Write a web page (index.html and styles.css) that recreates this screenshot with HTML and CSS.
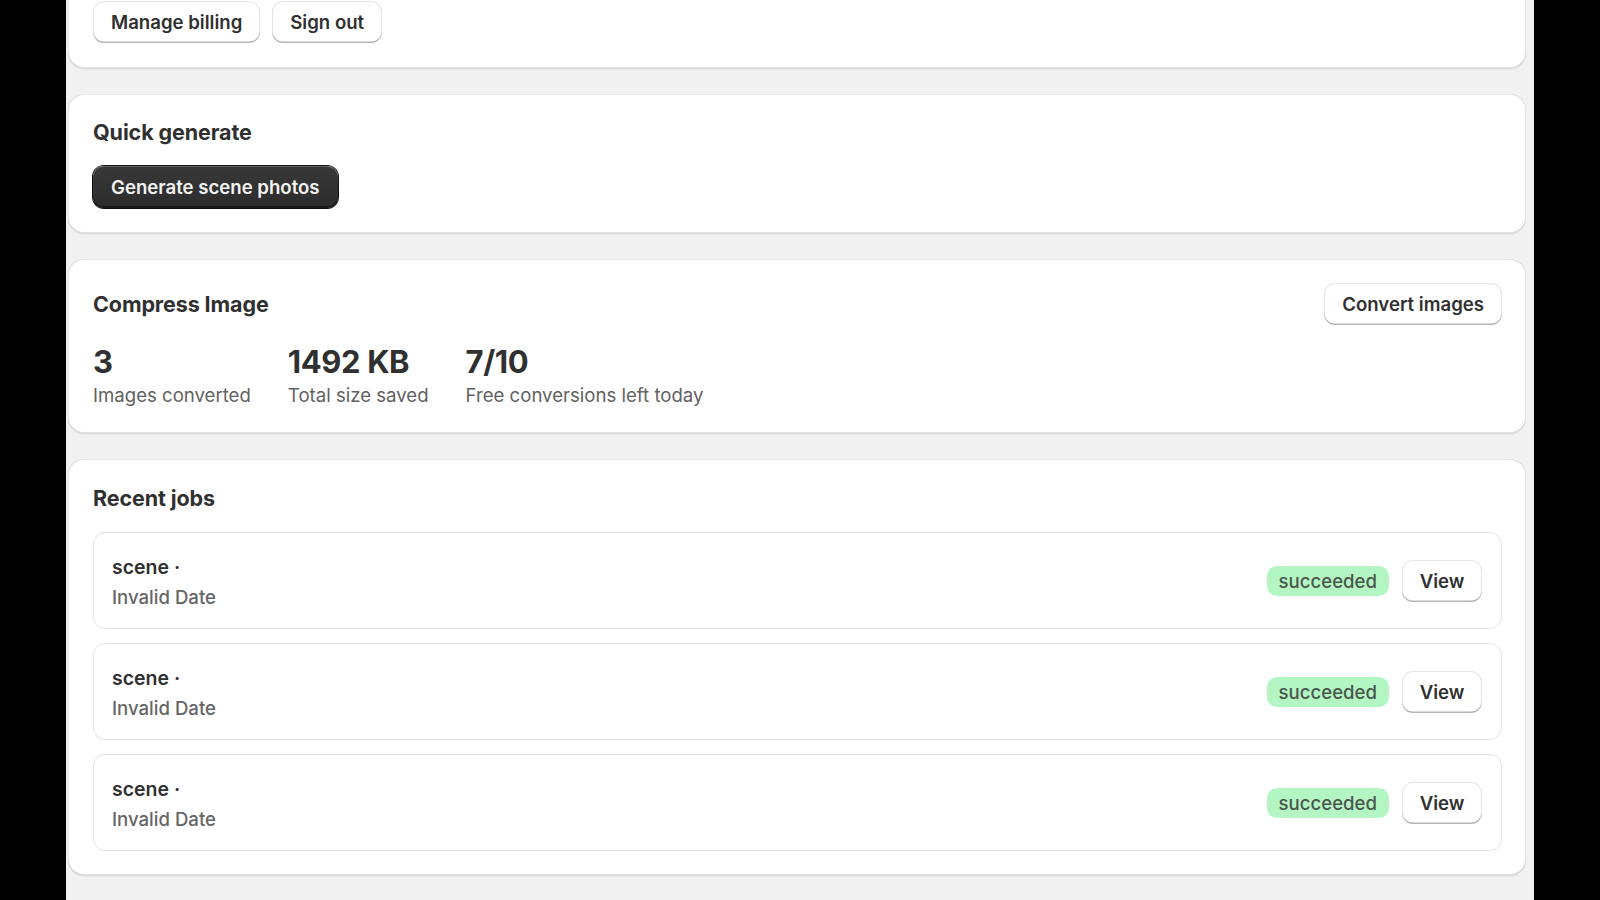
FILE: index.html
```html
<!DOCTYPE html>
<html lang="en">
<head>
  <meta charset="utf-8">
  <meta name="viewport" content="width=device-width, initial-scale=1">
  <title>Scene photos</title>
  <link rel="stylesheet" href="styles.css">
</head>
<body>
  <main class="page">
    <section class="card card-account">
      <div class="actions">
        <button class="btn">Manage billing</button>
        <button class="btn">Sign out</button>
      </div>
    </section>

    <section class="card card-quick">
      <h2 class="card-title">Quick generate</h2>
      <div class="actions">
        <button class="btn btn-primary">Generate scene photos</button>
      </div>
    </section>

    <section class="card card-compress">
      <div class="card-head">
        <h2 class="card-title">Compress Image</h2>
        <button class="btn">Convert images</button>
      </div>
      <div class="stats">
        <div class="stat">
          <div class="stat-value">3</div>
          <div class="stat-label">Images converted</div>
        </div>
        <div class="stat">
          <div class="stat-value">1492 KB</div>
          <div class="stat-label">Total size saved</div>
        </div>
        <div class="stat">
          <div class="stat-value">7/10</div>
          <div class="stat-label">Free conversions left today</div>
        </div>
      </div>
    </section>

    <section class="card card-jobs">
      <h2 class="card-title">Recent jobs</h2>
      <ul class="jobs">
        <li class="job">
          <div class="job-info">
            <div class="job-name">scene ·</div>
            <div class="job-date">Invalid Date</div>
          </div>
          <span class="badge badge-success">succeeded</span>
          <button class="btn">View</button>
        </li>
        <li class="job">
          <div class="job-info">
            <div class="job-name">scene ·</div>
            <div class="job-date">Invalid Date</div>
          </div>
          <span class="badge badge-success">succeeded</span>
          <button class="btn">View</button>
        </li>
        <li class="job">
          <div class="job-info">
            <div class="job-name">scene ·</div>
            <div class="job-date">Invalid Date</div>
          </div>
          <span class="badge badge-success">succeeded</span>
          <button class="btn">View</button>
        </li>
      </ul>
    </section>
  </main>
</body>
</html>
```

FILE: styles.css
```css
html,
body {
  margin: 0;
  height: 100%;
  background: #000;
  overflow: hidden;
}
body {
  font-family: Inter, "Noto Sans", sans-serif;
  font-size: 18.6px;
  color: #303030;
}

.page {
  width: 1468px;
  min-height: 100%;
  margin-left: 66px;
  padding: 0 8px 0 2px;
  box-sizing: border-box;
  background: #f1f1f1;
  display: flex;
  flex-direction: column;
  gap: 26px;
}

.card {
  background: #fff;
  border-radius: 16px;
  padding: 24px 24px 24px 25px;
  box-shadow:
    0 1.5px 0 0 rgba(26, 26, 26, .09),
    inset 0 1px 0 0 rgba(208, 208, 208, .5),
    inset 1px 0 0 0 rgba(204, 204, 204, .5),
    inset -1px 0 0 0 rgba(204, 204, 204, .5),
    inset 0 -1px 0 0 rgba(204, 204, 204, .6);
}
.card-account {
  margin-top: -21px;
  padding-top: 22px;
  padding-bottom: 25px;
}
.card-quick {
  padding-bottom: 25px;
}
.card-jobs {
  padding-top: 25px;
}

.card-title {
  margin: 0;
  font-size: 21.5px;
  line-height: 28px;
  font-weight: 650;
  letter-spacing: -.1px;
}
.card-head {
  display: flex;
  align-items: center;
  justify-content: space-between;
}

.actions {
  display: flex;
  gap: 12px;
}
.card-title + .actions {
  margin-top: 20px;
}

/* buttons */
.btn {
  height: 42px;
  padding: 0 18px;
  border: 0;
  border-radius: 11px;
  background: #fff;
  color: #303030;
  font: inherit;
  font-weight: 600;
  cursor: pointer;
  box-shadow:
    inset 0 -1.5px 0 0 #b5b5b5,
    inset 0 0 0 1px rgba(0, 0, 0, .1),
    inset 0 1px 0 1.5px #fff;
}
.btn-primary {
  padding: 0 18px;
  background: linear-gradient(#383838, #2c2c2c);
  color: #f3f3f3;
  box-shadow:
    0 0 0 1px #111,
    inset 0 1px 0 0 rgba(255, 255, 255, .22),
    inset 0 -2px 0 0 #1a1a1a;
}

/* stats */
.stats {
  display: flex;
  gap: 37px;
  margin-top: 18px;
}
.stat-value {
  font-size: 31px;
  line-height: 38px;
  font-weight: 700;
  letter-spacing: -.4px;
}
.stat-label {
  color: #616161;
  line-height: 28px;
}

/* recent jobs */
.jobs {
  list-style: none;
  margin: 20px 0 0;
  padding: 0;
  display: flex;
  flex-direction: column;
  gap: 14px;
}
.job {
  display: flex;
  align-items: center;
  gap: 13px;
  padding: 18px 19px 17px 18px;
  border: 1px solid #e3e3e3;
  border-radius: 12px;
}
.job-info {
  flex: 1;
  display: flex;
  flex-direction: column;
  gap: 3px;
  padding-top: 3px;
}
.job-name {
  font-size: 19.5px;
  font-weight: 600;
  line-height: 27px;
}
.job-date {
  color: #666;
  font-weight: 500;
  line-height: 27px;
}

.badge {
  display: inline-flex;
  align-items: center;
  height: 30px;
  padding: 0 12px;
  border-radius: 10px;
  font-weight: 500;
}
.badge-success {
  background: #b4f5c4;
  color: #4a574c;
}
.job .btn {
  width: 80px;
  padding: 0;
}
```
